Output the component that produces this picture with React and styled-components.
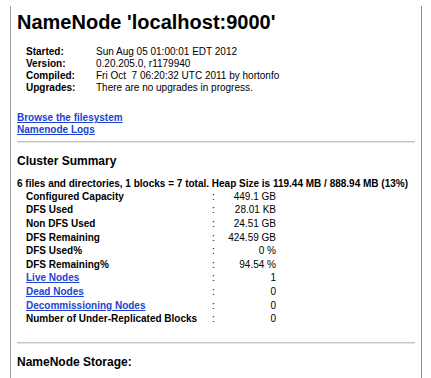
import React from "react";
import styled, { createGlobalStyle } from "styled-components";

const Global = createGlobalStyle`
  html, body { margin: 0; padding: 0; background: #fff; }
  body { font-family: "Liberation Sans", Arial, sans-serif; color: #000; }
`;

const Frame = styled.div`
  margin: 6px 0 0 10px;
  width: 412px;
  height: 372px;
  border-left: 1px solid #9a97a6;
  border-right: 1px solid #8e8e8e;
  padding: 0 6px;
  box-sizing: border-box;
  overflow: hidden;
`;

const Title = styled.h1`
  margin: 4px 0 0;
  font-size: 20px;
  line-height: 24px;
  font-weight: bold;
`;

const InfoTable = styled.div`
  margin: 12px 0 0 9px;
  display: grid;
  grid-template-columns: 70px auto;
  font-size: 10px;
  line-height: 12px;
`;

const InfoLabel = styled.div`
  font-weight: bold;
`;

const InfoValue = styled.div`
  white-space: pre;
`;

const Links = styled.div`
  margin-top: 18px;
  display: flex;
  flex-direction: column;
  font-size: 10px;
  line-height: 12px;
  font-weight: bold;
`;

const Link = styled.a`
  color: #1d43d4;
  text-decoration: underline;
`;

const Rule = styled.hr`
  margin: ${(p) => p.$top}px 0 0;
  border: 0;
  border-top: 1px solid #c4c4c4;
  border-bottom: 1px solid #e6e6e6;
  height: 0;
`;

const Heading = styled.h3`
  margin: 10px 0 0;
  font-size: 12px;
  line-height: 16px;
  font-weight: bold;
`;

const Summary = styled.div`
  margin-top: 9px;
  font-size: 10px;
  line-height: 12px;
  font-weight: bold;
  white-space: nowrap;
`;

const StatsTable = styled.div`
  margin-left: 9px;
  display: grid;
  grid-template-columns: 186px 12px 52px;
  grid-auto-rows: 13.6px;
  align-items: center;
  font-size: 10px;
  line-height: 12px;
`;

const StatLabel = styled.div`
  font-weight: bold;
  white-space: nowrap;
`;

const Colon = styled.div``;

const StatValue = styled.div`
  text-align: right;
  white-space: nowrap;
`;

const info = [
  ["Started:", "Sun Aug 05 01:00:01 EDT 2012"],
  ["Version:", "0.20.205.0, r1179940"],
  ["Compiled:", "Fri Oct  7 06:20:32 UTC 2011 by hortonfo"],
  ["Upgrades:", "There are no upgrades in progress."],
];

const stats = [
  ["Configured Capacity", "449.1 GB"],
  ["DFS Used", "28.01 KB"],
  ["Non DFS Used", "24.51 GB"],
  ["DFS Remaining", "424.59 GB"],
  ["DFS Used%", "0 %"],
  ["DFS Remaining%", "94.54 %"],
  ["Live Nodes", "1", true],
  ["Dead Nodes", "0", true],
  ["Decommissioning Nodes", "0", true],
  ["Number of Under-Replicated Blocks", "0"],
];

export default function App() {
  return (
    <>
      <Global />
      <Frame>
        <Title>NameNode 'localhost:9000'</Title>
        <InfoTable>
          {info.map(([k, v]) => (
            <React.Fragment key={k}>
              <InfoLabel>{k}</InfoLabel>
              <InfoValue>{v}</InfoValue>
            </React.Fragment>
          ))}
        </InfoTable>
        <Links>
          <div><Link href="#">Browse the filesystem</Link></div>
          <div><Link href="#">Namenode Logs</Link></div>
        </Links>
        <Rule $top={5} />
        <Heading>Cluster Summary</Heading>
        <Summary>
          6 files and directories, 1 blocks = 7 total. Heap Size is 119.44 MB / 888.94 MB (13%)
        </Summary>
        <StatsTable>
          {stats.map(([k, v, link]) => (
            <React.Fragment key={k}>
              <StatLabel>{link ? <Link href="#">{k}</Link> : k}</StatLabel>
              <Colon>:</Colon>
              <StatValue>{v}</StatValue>
            </React.Fragment>
          ))}
        </StatsTable>
        <Rule $top={16} />
        <Heading>NameNode Storage:</Heading>
      </Frame>
    </>
  );
}
